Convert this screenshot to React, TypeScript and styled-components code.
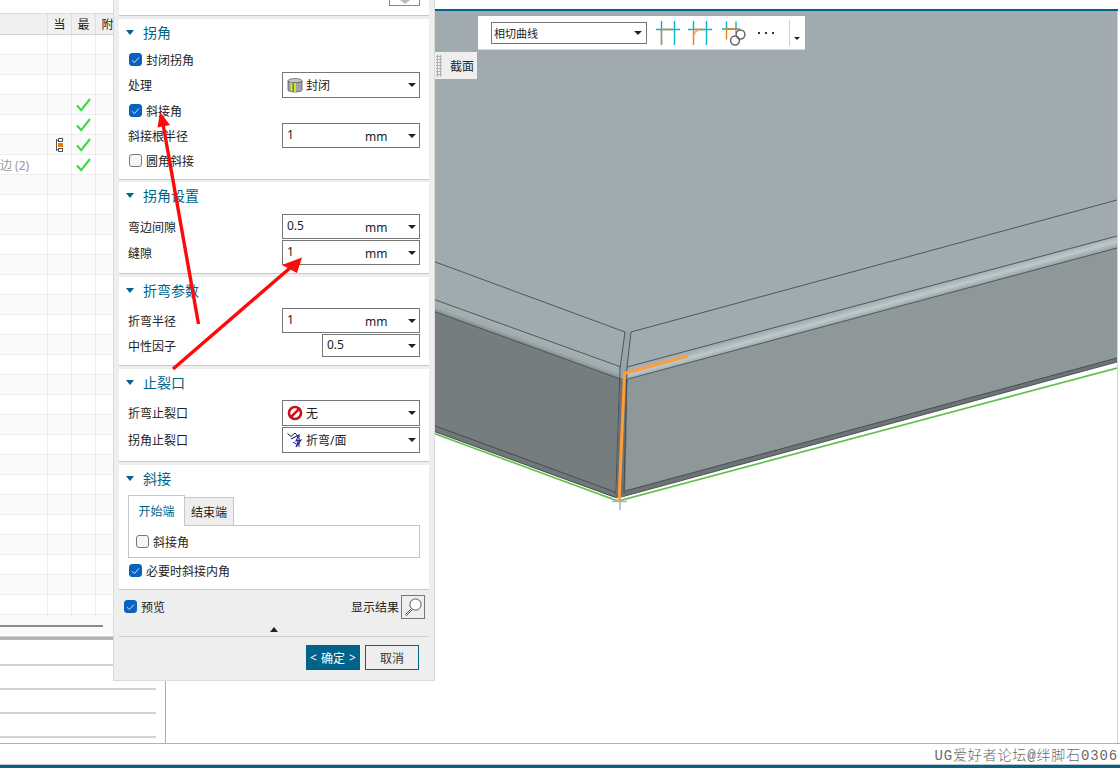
import React, { FC } from 'react';
import styled, { createGlobalStyle } from 'styled-components';

const TEAL = '#00648a';
const UI_FONT = '"Noto Sans", "Noto Sans CJK SC", sans-serif';

const GlobalStyle = createGlobalStyle`
  html, body {
    margin: 0;
    padding: 0;
    background: #fff;
  }
  body {
    font-family: ${UI_FONT};
    font-size: 12px;
    color: #222;
  }
`;

const TABLE_ROWS = 30;
const CHECKED_ROWS = [3, 4, 5, 6];

const Caret: FC = () => <CaretMark />;

const CheckTick: FC = () => (
  <svg width="15" height="14" viewBox="0 0 15 14">
    <path d="M1 7.5 L5.2 12.2 L14 1" fill="none" stroke="#3ed84a" strokeWidth="2.1" />
  </svg>
);

const TreeIcon: FC = () => (
  <svg width="7" height="14" viewBox="0 0 7 14" shapeRendering="crispEdges">
    <path d="M0.5 1 V12.5 M0.5 2.5 H2 M0.5 11.5 H2" stroke="#555" strokeWidth="1" fill="none" />
    <rect x="2.5" y="0.5" width="4" height="3" fill="#fff" stroke="#555" />
    <rect x="2.5" y="10.5" width="4" height="3" fill="#fff" stroke="#555" />
    <rect x="2" y="5" width="5" height="4" fill="#e07b10" />
  </svg>
);

const ClosedIcon: FC = () => (
  <svg width="16" height="15" viewBox="0 0 16 15">
    <ellipse cx="8" cy="2.8" rx="7" ry="2.3" fill="#c2c8c8" stroke="#666" strokeWidth="0.8" />
    <path d="M1 3 V12 C1 14.6 15 14.6 15 12 V3 C15 5.4 1 5.4 1 3 Z" fill="#9da5a5" stroke="#555" strokeWidth="0.8" />
    <path d="M4.5 4.6 V13.6 M8 5 V14" stroke="#e4e410" strokeWidth="1.8" />
    <path d="M6.2 5 V14" stroke="#3c9a30" strokeWidth="1.2" />
  </svg>
);

const NoneIcon: FC = () => (
  <svg width="16" height="16" viewBox="0 0 16 16">
    <circle cx="8" cy="8" r="6" fill="#fff" stroke="#c4141c" strokeWidth="2.6" />
    <path d="M3.8 12.2 L12.2 3.8" stroke="#c4141c" strokeWidth="2.6" />
  </svg>
);

const ReliefIcon: FC = () => (
  <svg width="16" height="16" viewBox="0 0 16 16">
    <path d="M0.5 1.5 L4 4.5 L8 1 L11.5 5" fill="none" stroke="#222" strokeWidth="1" />
    <path d="M4 7 L12 3 L9 9 L14 8 L9 15 L11 9.5" fill="none" stroke="#1c1cb0" strokeWidth="1.1" />
    <path d="M12 4 V15" stroke="#222" strokeWidth="1" />
    <path d="M6 10 L9 12" stroke="#1c1cb0" strokeWidth="1" />
  </svg>
);

const SearchIcon: FC = () => (
  <svg width="20" height="20" viewBox="0 0 20 20">
    <circle cx="12.5" cy="7.5" r="5.6" fill="#fff" stroke="#555" strokeWidth="1" />
    <path d="M8.5 11.5 L2.5 17.5 L3.5 18.5 L9.5 12.5" fill="#fff" stroke="#555" strokeWidth="1" />
  </svg>
);

const TangentIcon: FC = () => (
  <svg width="24" height="24" viewBox="0 0 24 24">
    <path d="M0 8.5 H24 M5.5 0 V24 M18.5 0 V24" stroke="#0fb0cf" strokeWidth="1.4" fill="none" />
    <path d="M5.5 24 V8.5 H18" stroke="#e8801a" strokeWidth="1.4" fill="none" />
  </svg>
);

const FilletIcon: FC = () => (
  <svg width="24" height="24" viewBox="0 0 24 24">
    <path d="M0 8.5 H24 M18.5 0 V24 M5.5 0 V9" stroke="#0fb0cf" strokeWidth="1.4" fill="none" />
    <path d="M5.5 24 V8.5 H18" stroke="#e8801a" strokeWidth="1.4" fill="none" />
    <path d="M6 15 Q6.5 10 11 9" stroke="#f0b070" strokeWidth="1.6" fill="none" />
  </svg>
);

const ChainIcon: FC = () => (
  <svg width="26" height="26" viewBox="0 0 26 26">
    <path d="M0 9 H18 M4.5 1.5 V8.5 M14 1.5 V8.5" stroke="#0fb0cf" strokeWidth="1.4" fill="none" />
    <path d="M4.5 19.5 V9 H14 V13" stroke="#e8801a" strokeWidth="1.4" fill="none" />
    <circle cx="18.5" cy="14.5" r="4.4" fill="none" stroke="#666" strokeWidth="1.5" />
    <circle cx="13" cy="20.5" r="4.4" fill="none" stroke="#666" strokeWidth="1.5" />
  </svg>
);

const Model: FC = () => (
  <ModelSvg viewBox="166 11 951 732" preserveAspectRatio="none">
    <defs>
      <linearGradient id="leftFold" gradientUnits="userSpaceOnUse" x1="528" y1="334" x2="524" y2="345">
        <stop offset="0" stopColor="#a6b1b4" />
        <stop offset="0.55" stopColor="#a0abae" />
        <stop offset="1" stopColor="#7d8688" />
      </linearGradient>
      <linearGradient id="rightFold" gradientUnits="userSpaceOnUse" x1="800" y1="322" x2="803" y2="333">
        <stop offset="0" stopColor="#a2aeb2" />
        <stop offset="0.5" stopColor="#bdc9cd" />
        <stop offset="1" stopColor="#98a3a6" />
      </linearGradient>
    </defs>

    {/* top sheet */}
    <polygon points="430,11 1117,11 1117,248 628,379 620,379 430,310" fill="#9fabaf" />
    {/* left flange */}
    <polygon points="430,310 620,379 616,498 430,430" fill="#757d7f" />
    <polygon points="430,298 621,367 620,379 430,310" fill="url(#leftFold)" />
    <polygon points="430,424 615,492 617,498 430,430" fill="#6f7779" />
    {/* right flange */}
    <polygon points="628,379 1117,248 1117,361 624,495" fill="#8e9898" />
    <polygon points="627,367 1117,236 1117,248 628,379" fill="url(#rightFold)" />
    <polygon points="625,491 1117,358 1117,362 625,496" fill="#6c7476" />
    {/* seam */}
    <polygon points="625,332 631,332 627,367 628,379 620,379 620,368" fill="#98a4a7" />
    <polygon points="620,378 628,379 625,497 616,498" fill="#6c7375" />

    <g fill="none" stroke="#3a4244" strokeWidth="0.8">
      <path d="M430 260 L625 332 L620 368 L616 492" />
      <path d="M430 298 L621 367" />
      <path d="M430 310 L620 379" />
      <path d="M430 424 L615 492 L619 498" />
      <path d="M430 430 L617 498" />
      <path d="M1117 200 L631 332 L627 367 L624 493" />
      <path d="M1117 236 L627 367" />
      <path d="M1117 248 L628 379" />
      <path d="M1117 358 L625 491" />
      <path d="M1117 362 L625 496" />
    </g>

    <path d="M430 432 L618 501 L1117 368" fill="none" stroke="#62c04e" strokeWidth="1.8" />
    <path d="M612 501.5 H627 M620 501 V510" fill="none" stroke="#aab2dc" strokeWidth="1.6" />
    <path d="M688 356 L626 373 L624.5 373 L619 502" fill="none" stroke="#ff9c3c" strokeWidth="3" />
  </ModelSvg>
);

const Field: FC<{ value: string }> = ({ value }) => (
  <FieldBox $width={138} $height={25}>
    <FieldValue>{value}</FieldValue>
    <FieldUnit>mm</FieldUnit>
    <Caret />
  </FieldBox>
);

const IconSelect: FC<{ icon: React.ReactNode; label: string }> = ({ icon, label }) => (
  <FieldBox $width={138} $height={26}>
    <SelectIcon>{icon}</SelectIcon>
    <SelectLabel>{label}</SelectLabel>
    <Caret />
  </FieldBox>
);

const Check: FC<{ on?: boolean }> = ({ on }) => (
  <CheckBox $on={!!on}>
    {on && (
      <svg width="9" height="8" viewBox="0 0 9 8">
        <path d="M1 4.2 L3.4 6.6 L8 1.4" fill="none" stroke="#cfe2f7" strokeWidth="1" />
      </svg>
    )}
  </CheckBox>
);

const SectionHead: FC<{ title: string }> = ({ title }) => (
  <Head>
    <HeadTriangle />
    <HeadTitle>{title}</HeadTitle>
  </Head>
);

export default function App() {
  return (
    <Page>
      <GlobalStyle />
      <Main>
        <LeftPane>
          <TableTop />
          <TableHeader>
            <HeaderCell />
            <HeaderCell>当</HeaderCell>
            <HeaderCell>最</HeaderCell>
            <HeaderCell>附</HeaderCell>
            <HeaderCell />
          </TableHeader>
          <TableBody>
            {Array.from({ length: TABLE_ROWS }).map((_, i) => (
              // eslint-disable-next-line react/no-array-index-key
              <TableRow key={i} $alt={i % 2 === 1}>
                <NameCell>{i === 6 ? '边 (2)' : ''}</NameCell>
                <Cell>{i === 5 && <TreeIcon />}</Cell>
                <Cell>{CHECKED_ROWS.includes(i) && <CheckTick />}</Cell>
                <Cell />
              </TableRow>
            ))}
          </TableBody>
          <ScrollTrack>
            <ScrollThumb />
          </ScrollTrack>
          <PaneSplit />
          <LowerPane>
            <LowerRow />
            <LowerRow />
            <LowerRow />
            <LowerRow />
          </LowerPane>
        </LeftPane>
        <Graphics>
          <TopStrip />
          <Viewport>
            <Model />
          </Viewport>
        </Graphics>
      </Main>
      <StatusBar>
        <Watermark>UG爱好者论坛@绊脚石0306</Watermark>
      </StatusBar>
      <BottomBar />

      <Toolbar>
        <ToolSelect>
          <span>相切曲线</span>
          <Caret />
        </ToolSelect>
        <ToolIcon $width={24} $gap={9}><TangentIcon /></ToolIcon>
        <ToolIcon $width={24} $gap={8}><FilletIcon /></ToolIcon>
        <ToolIcon $width={26} $gap={10}><ChainIcon /></ToolIcon>
        <ToolDots>
          <i />
          <i />
          <i />
        </ToolDots>
        <ToolDivider />
        <ToolMore />
      </Toolbar>

      <SectionTab>
        <Grip />
        截面
      </SectionTab>

      <Dialog>
        <TopPanel>
          <TopButton>
            <svg width="12" height="6" viewBox="0 0 12 6">
              <path d="M1 0 L6 4 L11 0 Z" fill="#bbb" />
            </svg>
          </TopButton>
        </TopPanel>

        <Section $height={161} $gap={2}>
          <SectionHead title="拐角" />
          <Rows $top={2}>
            <Row $height={25}><Check on /><CheckLabel>封闭拐角</CheckLabel></Row>
            <Row $height={26}><Label>处理</Label><IconSelect icon={<ClosedIcon />} label="封闭" /></Row>
            <Row $height={25}><Check on /><CheckLabel>斜接角</CheckLabel></Row>
            <Row $height={25}><Label>斜接根半径</Label><Field value="1" /></Row>
            <Row $height={25}><Check /><CheckLabel>圆角斜接</CheckLabel></Row>
          </Rows>
        </Section>

        <Section $height={92} $gap={3}>
          <SectionHead title="拐角设置" />
          <Rows $top={5}>
            <Row $height={27}><Label>弯边间隙</Label><Field value="0.5" /></Row>
            <Row $height={25}><Label>缝隙</Label><Field value="1" /></Row>
          </Rows>
        </Section>

        <Section $height={89} $gap={3}>
          <SectionHead title="折弯参数" />
          <Rows $top={4}>
            <Row $height={27}><Label>折弯半径</Label><Field value="1" /></Row>
            <Row $height={23}>
              <Label>中性因子</Label>
              <FieldBox $width={98} $height={23}>
                <FieldValue>0.5</FieldValue>
                <Caret />
              </FieldBox>
            </Row>
          </Rows>
        </Section>

        <Section $height={93} $gap={3}>
          <SectionHead title="止裂口" />
          <Rows $top={4}>
            <Row $height={28}><Label>折弯止裂口</Label><IconSelect icon={<NoneIcon />} label="无" /></Row>
            <Row $height={26}><Label>拐角止裂口</Label><IconSelect icon={<ReliefIcon />} label="折弯/面" /></Row>
          </Rows>
        </Section>

        <Section $height={125} $gap={0}>
          <SectionHead title="斜接" />
          <Tabs>
            <Tab $active>开始端</Tab>
            <Tab>结束端</Tab>
          </Tabs>
          <TabPanel>
            <Check />
            <CheckLabel>斜接角</CheckLabel>
          </TabPanel>
          <Row $height={25}><Check on /><CheckLabel>必要时斜接内角</CheckLabel></Row>
        </Section>

        <PreviewRow>
          <Check on />
          <CheckLabel>预览</CheckLabel>
          <ResultLabel>显示结果</ResultLabel>
          <ResultButton><SearchIcon /></ResultButton>
        </PreviewRow>
        <CollapseRow>
          <CollapseMark />
        </CollapseRow>
        <ButtonRow>
          <PrimaryButton>
            <span>&lt;</span>
            确定
            <span>&gt;</span>
          </PrimaryButton>
          <CancelButton>取消</CancelButton>
        </ButtonRow>
      </Dialog>

      <Annotations viewBox="0 0 1120 768">
        <path d="M198.5 324 L163 124" stroke="#ff0a0a" strokeWidth="3.4" fill="none" />
        <polygon points="160,112 170,125 157.5,127.5" fill="#ff0a0a" />
        <path d="M173 369 L290 268" stroke="#ff0a0a" strokeWidth="3.4" fill="none" />
        <polygon points="302,257.5 297,273 282,265" fill="#ff0a0a" />
      </Annotations>
    </Page>
  );
}

const Page = styled.div`
  position: relative;
  width: 1120px;
  height: 768px;
  overflow: hidden;
  display: flex;
  flex-direction: column;
  background: #fff;
`;

const Main = styled.div`
  flex: 1;
  min-height: 0;
  display: flex;
`;

const LeftPane = styled.div`
  width: 165px;
  flex: none;
  display: flex;
  flex-direction: column;
  border-right: 1px solid #aaa;
`;

const TableTop = styled.div`
  height: 13px;
  flex: none;
  border-bottom: 1px solid #dcdcdc;
`;

const TableHeader = styled.div`
  height: 20px;
  flex: none;
  display: grid;
  grid-template-columns: 48px 24px 24px 24px 1fr;
  background: #f0f0f0;
  border-bottom: 1px solid #d2d2d2;
`;

const HeaderCell = styled.div`
  display: flex;
  align-items: center;
  justify-content: center;
  border-right: 1px solid #dedede;
  font-size: 12px;
  color: #222;
`;

const TableBody = styled.div`
  height: 582px;
  flex: none;
  overflow: hidden;
`;

const TableRow = styled.div<{ $alt: boolean }>`
  height: 20px;
  box-sizing: border-box;
  display: grid;
  grid-template-columns: 48px 24px 24px 1fr;
  background: ${(p) => (p.$alt ? '#fafafa' : '#fff')};
  border-bottom: 1px solid #ececec;
`;

const Cell = styled.div`
  display: flex;
  align-items: center;
  justify-content: center;
  border-right: 1px solid #ececec;
`;

const NameCell = styled(Cell)`
  justify-content: flex-start;
  color: #999;
  font-size: 12px;
  white-space: nowrap;
`;

const ScrollTrack = styled.div`
  height: 17px;
  flex: none;
  background: #fafafa;
  padding-top: 8px;
  box-sizing: border-box;
`;

const ScrollThumb = styled.div`
  width: 103px;
  height: 2px;
  background: #8a8a8a;
`;

const PaneSplit = styled.div`
  height: 3px;
  flex: none;
  margin-top: 2px;
  background: #b4b4b4;
  border-top: 1px solid #d0d0d0;
`;

const LowerPane = styled.div`
  flex: 1;
  padding-top: 2px;
`;

const LowerRow = styled.div`
  width: 156px;
  height: 24px;
  box-sizing: border-box;
  border-bottom: 2px solid #d2d2d2;
`;

const Graphics = styled.div`
  flex: 1;
  min-width: 0;
  display: flex;
  flex-direction: column;
  padding-right: 2px;
`;

const TopStrip = styled.div`
  height: 9px;
  flex: none;
  border-bottom: 2px solid ${TEAL};
`;

const Viewport = styled.div`
  flex: 1;
  min-height: 0;
  border-right: 1px solid #d4d4d4;
`;

const ModelSvg = styled.svg`
  display: block;
  width: 100%;
  height: 100%;
`;

const StatusBar = styled.div`
  height: 22px;
  flex: none;
  box-sizing: border-box;
  border-top: 1px solid #b0b0b0;
  border-bottom: 1px solid #c4c4c4;
  display: flex;
  align-items: center;
  justify-content: flex-end;
  padding-right: 2px;
`;

const Watermark = styled.div`
  font-family: "Liberation Mono", "Noto Sans CJK SC", monospace;
  font-size: 14px;
  font-weight: 300;
  letter-spacing: 0.85px;
  color: #6a6a6a;
  white-space: nowrap;
`;

const BottomBar = styled.div`
  height: 3px;
  flex: none;
  background: ${TEAL};
`;

const CaretMark = styled.div`
  flex: none;
  width: 0;
  height: 0;
  margin-left: auto;
  border-left: 4px solid transparent;
  border-right: 4px solid transparent;
  border-top: 4px solid #222;
`;

const Toolbar = styled.div`
  position: absolute;
  left: 478px;
  top: 16px;
  width: 327px;
  height: 33px;
  background: #fff;
  border-bottom: 1px solid #d6d6d6;
  display: flex;
  align-items: center;
`;

const ToolSelect = styled.div`
  width: 156px;
  height: 22px;
  box-sizing: border-box;
  margin-left: 13px;
  border: 1px solid #777;
  display: flex;
  align-items: center;
  padding: 0 4px 0 2px;
  font-size: 11px;
  color: #222;
`;

const ToolIcon = styled.div<{ $width: number; $gap: number }>`
  width: ${(p) => p.$width}px;
  height: 26px;
  flex: none;
  margin-left: ${(p) => p.$gap}px;
  display: flex;
  align-items: center;
`;

const ToolDots = styled.div`
  display: flex;
  gap: 5px;
  margin-left: 10px;

  i {
    display: block;
    width: 2px;
    height: 2px;
    background: #333;
  }
`;

const ToolDivider = styled.div`
  width: 1px;
  height: 26px;
  margin-left: 15px;
  background: #cfcfcf;
`;

const ToolMore = styled.div`
  width: 0;
  height: 0;
  margin: 11px 0 0 4px;
  border-left: 3px solid transparent;
  border-right: 3px solid transparent;
  border-top: 3px solid #222;
`;

const SectionTab = styled.div`
  position: absolute;
  left: 435px;
  top: 52px;
  width: 42px;
  height: 27px;
  background: #eee;
  display: flex;
  align-items: center;
  font-size: 12px;
  color: #222;
`;

const Grip = styled.div`
  width: 6px;
  height: 22px;
  margin: 0 8px 0 1px;
  background-image: radial-gradient(#b0b0b0 1px, transparent 1.2px);
  background-size: 3px 3px;
`;

const Dialog = styled.div`
  position: absolute;
  left: 113px;
  top: 0;
  width: 322px;
  height: 681px;
  box-sizing: border-box;
  padding: 0 5px;
  background: #eee;
  border: 1px solid #dadada;
  border-top: none;
  display: flex;
  flex-direction: column;
`;

const TopPanel = styled.div`
  height: 15px;
  flex: none;
  margin-bottom: 3px;
  background: #fff;
  border-bottom: 1px solid #c8c8c8;
  display: flex;
  justify-content: flex-end;
  padding-right: 9px;
`;

const TopButton = styled.div`
  width: 31px;
  height: 6px;
  box-sizing: border-box;
  border: 1px solid #888;
  border-top: none;
  display: flex;
  justify-content: center;
`;

const Section = styled.div<{ $height: number; $gap: number }>`
  height: ${(p) => p.$height}px;
  flex: none;
  box-sizing: border-box;
  margin-bottom: ${(p) => p.$gap}px;
  padding: 0 9px;
  background: #fff;
  border-bottom: 1px solid #c8c8c8;
`;

const Head = styled.div`
  height: 26px;
  display: flex;
  align-items: center;
  margin-left: -2px;
`;

const HeadTriangle = styled.div`
  width: 0;
  height: 0;
  margin-right: 9px;
  border-left: 4.5px solid transparent;
  border-right: 4.5px solid transparent;
  border-top: 5px solid ${TEAL};
`;

const HeadTitle = styled.div`
  font-size: 14px;
  color: ${TEAL};
`;

const Rows = styled.div<{ $top: number }>`
  margin-top: ${(p) => p.$top}px;
`;

const Row = styled.div<{ $height: number }>`
  height: ${(p) => p.$height}px;
  display: flex;
  align-items: center;
  justify-content: flex-start;
`;

const Label = styled.div`
  font-size: 12px;
  color: #222;
  white-space: nowrap;
`;

const CheckLabel = styled(Label)`
  margin-left: 4px;
`;

const CheckBox = styled.div<{ $on: boolean }>`
  width: 13px;
  height: 13px;
  flex: none;
  box-sizing: border-box;
  margin-left: 1px;
  border-radius: 3px;
  display: flex;
  align-items: center;
  justify-content: center;
  background: ${(p) => (p.$on ? '#0a62bf' : '#f6f6f6')};
  border: 1px solid ${(p) => (p.$on ? '#0a62bf' : '#777')};
`;

const FieldBox = styled.div<{ $width: number; $height: number }>`
  width: ${(p) => p.$width}px;
  height: ${(p) => p.$height}px;
  flex: none;
  box-sizing: border-box;
  margin-left: auto;
  padding: 0 3px 0 4px;
  background: #fff;
  border: 1px solid #777;
  display: flex;
  align-items: center;
`;

const FieldValue = styled.div`
  margin-top: -3px;
  font-size: 12px;
  color: #222;
`;

const FieldUnit = styled.div`
  position: absolute;
  margin-left: 78px;
  margin-top: 1px;
  font-size: 12px;
  color: #222;
`;

const SelectIcon = styled.div`
  width: 16px;
  height: 16px;
  flex: none;
  margin-right: 3px;
  display: flex;
  align-items: center;
`;

const SelectLabel = styled.div`
  font-size: 12px;
  color: #222;
`;

const Tabs = styled.div`
  display: flex;
  align-items: flex-end;
  height: 30px;
  margin-top: 4px;
`;

const Tab = styled.div<{ $active?: boolean }>`
  position: relative;
  z-index: ${(p) => (p.$active ? 1 : 0)};
  width: ${(p) => (p.$active ? 57 : 50)}px;
  height: ${(p) => (p.$active ? 31 : 28)}px;
  box-sizing: border-box;
  display: flex;
  align-items: center;
  justify-content: center;
  white-space: nowrap;
  font-size: 12px;
  color: ${(p) => (p.$active ? TEAL : '#222')};
  background: ${(p) => (p.$active ? '#fff' : '#eee')};
  border: 1px solid #c8c8c8;
  border-bottom: none;
  margin-bottom: ${(p) => (p.$active ? -1 : 0)}px;
  margin-right: ${(p) => (p.$active ? -1 : 0)}px;
`;

const TabPanel = styled.div`
  height: 33px;
  box-sizing: border-box;
  border: 1px solid #c4c4c4;
  display: flex;
  align-items: center;
  padding-left: 6px;
`;

const PreviewRow = styled.div`
  height: 33px;
  flex: none;
  display: flex;
  align-items: center;
  padding: 0 4px;
`;

const ResultLabel = styled(Label)`
  margin-left: auto;
  margin-right: 2px;
`;

const ResultButton = styled.div`
  width: 24px;
  height: 24px;
  box-sizing: border-box;
  border: 1px solid #777;
  display: flex;
  align-items: center;
  justify-content: center;
`;

const CollapseRow = styled.div`
  height: 13px;
  flex: none;
  border-bottom: 1px solid #d2d2d2;
  display: flex;
  justify-content: center;
`;

const CollapseMark = styled.div`
  width: 0;
  height: 0;
  margin-top: 4px;
  border-left: 4.5px solid transparent;
  border-right: 4.5px solid transparent;
  border-bottom: 5px solid #222;
`;

const ButtonRow = styled.div`
  display: flex;
  justify-content: flex-end;
  gap: 5px;
  padding: 8px 10px 0 0;
`;

const PrimaryButton = styled.div`
  width: 54px;
  height: 25px;
  box-sizing: border-box;
  background: ${TEAL};
  color: #fff;
  font-size: 12px;
  display: flex;
  align-items: center;
  justify-content: space-between;
  padding: 0 4px;
`;

const CancelButton = styled.div`
  width: 54px;
  height: 25px;
  box-sizing: border-box;
  border: 1px solid ${TEAL};
  color: #333;
  font-size: 12px;
  display: flex;
  align-items: center;
  justify-content: center;
`;

const Annotations = styled.svg`
  position: absolute;
  left: 0;
  top: 0;
  width: 1120px;
  height: 768px;
  pointer-events: none;
`;
